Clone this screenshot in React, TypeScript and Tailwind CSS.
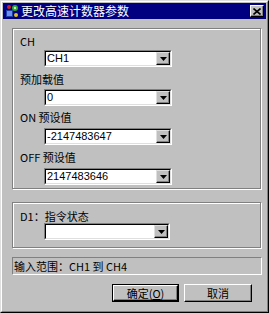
import React from 'react';

const CJK = "font-['Noto_Sans_CJK_SC','Liberation_Sans',sans-serif]";

function TitleIcon() {
  return (
    <svg width="14" height="14" viewBox="0 0 14 14">
      <rect x="1" y="6" width="7" height="7" fill="#1c3fa8" />
      <rect x="2" y="7" width="5" height="5" fill="#6f8ff0" />
      <circle cx="10" cy="4" r="3" fill="#2aa82a" />
      <circle cx="10" cy="4" r="1.2" fill="#c8f0c0" />
      <circle cx="4" cy="3" r="2" fill="#d02020" />
      <circle cx="11" cy="11" r="2" fill="#e0c020" />
    </svg>
  );
}

function Combo({ value, w = 'w-[128px]' }: { value: string; w?: string }) {
  return (
    <div
      className={`flex h-[17px] ${w} border border-t-[#808080] border-l-[#808080] border-r-white border-b-white`}
    >
      <div className="flex flex-1 border border-t-black border-l-black border-r-[#dfdfdf] border-b-[#dfdfdf] bg-white">
        <span className="flex-1 pl-[1px] text-[11px] leading-[13px] text-black font-['Liberation_Sans',sans-serif]">
          {value}
        </span>
        <div className="flex w-[14px] items-center justify-center border border-t-[#dfdfdf] border-l-[#dfdfdf] border-r-black border-b-black bg-[#c0c0c0] shadow-[inset_-1px_-1px_0_#808080]">
          <svg width="7" height="4" viewBox="0 0 7 4">
            <path d="M0 0h7L3.5 4z" fill="#000" />
          </svg>
        </div>
      </div>
    </div>
  );
}

function Label({ children }: { children: React.ReactNode }) {
  return <div className={`h-[12px] pl-[7px] text-[11px] leading-[12px] text-black ${CJK}`}>{children}</div>;
}

function Button({ children, def }: { children: React.ReactNode; def?: boolean }) {
  return (
    <div
      className={`flex h-[18px] items-center justify-center ${def ? 'w-[67px] border border-black' : 'w-[68px]'} bg-[#c0c0c0]`}
    >
      <div
        className={`flex h-full w-full items-center justify-center border border-t-white border-l-white border-r-black border-b-black shadow-[inset_-1px_-1px_0_#808080] text-[11px] text-black ${CJK}`}
      >
        {children}
      </div>
    </div>
  );
}

export default function App() {
  return (
    <div className="flex h-[313px] w-[269px] flex-col border border-t-[#dfdfdf] border-l-[#dfdfdf] border-r-black border-b-black bg-[#c0c0c0]">
      <div className="flex h-full flex-col border border-t-white border-l-white border-r-[#808080] border-b-[#808080] px-[1px] pt-[1px]">
        {/* title bar */}
        <div className="flex h-[16px] items-center bg-[#000080] pl-[2px] pr-[2px]">
          <TitleIcon />
          <span className={`ml-[2px] text-[12px] leading-[14px] text-white ${CJK}`}>更改高速计数器参数</span>
          <div className="ml-auto flex h-[12px] w-[14px] items-center justify-center border border-t-white border-l-white border-r-black border-b-black bg-[#c0c0c0] shadow-[inset_-1px_-1px_0_#808080]">
            <svg width="8" height="7" viewBox="0 0 8 7">
              <path d="M0.5 0.5l7 6M7.5 0.5l-7 6" stroke="#000" strokeWidth="1.6" />
            </svg>
          </div>
        </div>

        <div className="flex flex-1 flex-col px-[9px] pt-[9px]">
          {/* group 1 */}
          <div className="flex h-[161px] w-[249px] flex-col border border-[#808080] shadow-[inset_1px_1px_0_#fff,1px_1px_0_#fff] pt-[6px]">
            <Label>CH</Label>
            <div className="ml-[31px] mt-[3px]">
              <Combo value="CH1" />
            </div>
            <div className="mt-[6px]">
              <Label>预加载值</Label>
            </div>
            <div className="ml-[31px] mt-[4px]">
              <Combo value="0" />
            </div>
            <div className="mt-[5px]">
              <Label>ON 预设值</Label>
            </div>
            <div className="ml-[31px] mt-[5px]">
              <Combo value="-2147483647" />
            </div>
            <div className="mt-[6px]">
              <Label>OFF 预设值</Label>
            </div>
            <div className="ml-[31px] mt-[5px]">
              <Combo value="2147483646" />
            </div>
          </div>

          {/* group 2 */}
          <div className="mt-[13px] flex h-[46px] w-[249px] flex-col border border-[#808080] shadow-[inset_1px_1px_0_#fff,1px_1px_0_#fff] pt-[7px]">
            <Label>D1：指令状态</Label>
            <div className="ml-[31px] mt-[1px]">
              <Combo value="" w="w-[126px]" />
            </div>
          </div>

          {/* status */}
          <div className="mt-[9px] flex h-[18px] w-[250px] items-center border border-t-[#808080] border-l-[#808080] border-r-white border-b-white pl-[1px]">
            <span className={`text-[11px] leading-[12px] text-black ${CJK}`}>输入范围：CH1 到 CH4</span>
          </div>

          {/* buttons */}
          <div className="mt-[9px] flex justify-end gap-[5px] pr-[5px]">
            <Button def>
              确定(<span className="underline">O</span>)
            </Button>
            <Button>取消</Button>
          </div>
        </div>
      </div>
    </div>
  );
}
